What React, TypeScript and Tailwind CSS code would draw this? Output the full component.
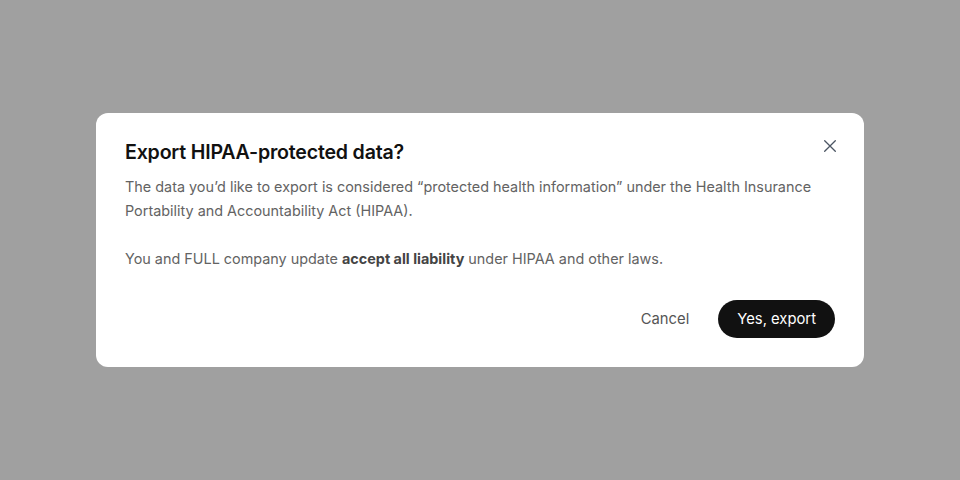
import React from "react";

export default function App() {
  return (
    <div
      className="w-[960px] h-[480px] bg-[#a0a0a0] flex items-center justify-center"
      style={{ fontFamily: "Inter, 'Noto Sans', sans-serif" }}
    >
      <div className="relative w-[768px] h-[254px] bg-white rounded-[12px] px-[29px] pt-[25px] pb-[29px] flex flex-col">
        <button className="absolute right-[28px] top-[27px] w-[12px] h-[12px] flex items-center justify-center text-[#4b5563]">
          <svg width="12" height="12" viewBox="0 0 12 12" fill="none" stroke="currentColor" strokeWidth="1.3" strokeLinecap="round">
            <path d="M0.7 0.7 L11.3 11.3 M11.3 0.7 L0.7 11.3" />
          </svg>
        </button>
        <h2 className="text-[19.6px] leading-[28px] font-semibold text-[#111111] tracking-[-0.2px]">
          Export HIPAA-protected data?
        </h2>
        <p className="mt-[9px] text-[14.4px] leading-[24px] text-[#636363]">
          The data you’d like to export is considered “protected health information” under the Health Insurance Portability and Accountability Act (HIPAA).
        </p>
        <p className="mt-[24px] text-[14.4px] leading-[24px] text-[#636363]">
          You and FULL company update <span className="font-bold text-[#444444]">accept all liability</span> under HIPAA and other laws.
        </p>
        <div className="mt-auto flex items-center justify-end gap-[29px]">
          <button className="text-[14.8px] text-[#555555]">Cancel</button>
          <button className="h-[38px] px-[19px] rounded-full bg-[#111111] text-white text-[14.8px]">
            Yes, export
          </button>
        </div>
      </div>
    </div>
  );
}
